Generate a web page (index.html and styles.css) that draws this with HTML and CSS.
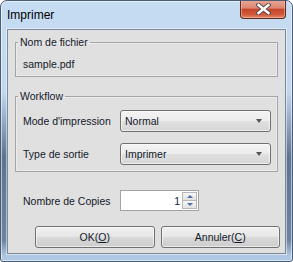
FILE: index.html
```html
<!DOCTYPE html>
<html lang="fr">
<head>
  <meta charset="UTF-8">
  <title>Imprimer</title>
  <link rel="stylesheet" href="styles.css">
</head>
<body>
  <div class="window">
    <div class="titlebar">
      <span class="title">Imprimer</span>
      <button class="close" aria-label="Fermer">
        <svg width="15" height="12" viewBox="0 0 15 12">
          <path d="M2.5 2 L12.5 10 M12.5 2 L2.5 10" stroke="#5a4a48" stroke-width="4.4" stroke-linecap="square"/>
          <path d="M2.5 2 L12.5 10 M12.5 2 L2.5 10" stroke="#ffffff" stroke-width="2.4" stroke-linecap="square"/>
        </svg>
      </button>
    </div>

    <div class="client">
      <fieldset class="group group-file">
        <legend>Nom de fichier</legend>
        <div class="filename">sample.pdf</div>
      </fieldset>

      <fieldset class="group group-workflow">
        <legend>Workflow</legend>
        <div class="row">
          <label class="label">Mode d'impression</label>
          <div class="combo">Normal<span class="arrow"></span></div>
        </div>
        <div class="row">
          <label class="label">Type de sortie</label>
          <div class="combo">Imprimer<span class="arrow"></span></div>
        </div>
      </fieldset>

      <div class="row copies">
        <label class="label">Nombre de Copies</label>
        <div class="spinbox">
          <span class="value">1</span>
          <div class="spin">
            <span class="spin-btn up"><span class="tri-up"></span></span>
            <span class="spin-btn down"><span class="tri-down"></span></span>
          </div>
        </div>
      </div>

      <div class="actions">
        <button class="btn">OK(<u>O</u>)</button>
        <button class="btn">Annuler(<u>C</u>)</button>
      </div>
    </div>
  </div>
</body>
</html>
```

FILE: styles.css
```css
body {
  margin: 0;
  background: #ffffff;
  font-family: 'Liberation Sans', Arial, sans-serif;
  font-size: 10.5px;
  color: #13192a;
}
.window {
  width: 293px;
  height: 262px;
  box-sizing: border-box;
  border: 1px solid #4a5d73;
  border-radius: 7px 7px 3px 3px;
  background:
    linear-gradient(to bottom, rgba(60, 85, 115, 0) 35%, rgba(60, 85, 115, 0.75) 60%, rgba(60, 85, 115, 0.6) 92%, rgba(60, 85, 115, 0) 98%) left top / 6px 100% no-repeat,
    linear-gradient(to bottom, rgba(60, 85, 115, 0) 35%, rgba(60, 85, 115, 0.75) 60%, rgba(60, 85, 115, 0.6) 92%, rgba(60, 85, 115, 0) 98%) right top / 6px 100% no-repeat,
    linear-gradient(to bottom, #c6dcf2 0%, #c0d7ef 40%, #aec8e4 100%);
  box-shadow: inset 0 0 0 1px rgba(255, 255, 255, 0.55);
  display: flex;
  flex-direction: column;
  overflow: hidden;
}
.titlebar {
  height: 28px;
  display: flex;
  align-items: center;
  padding-left: 6px;
  flex-shrink: 0;
}
.title {
  font-size: 12px;
  color: #000000;
}
.close {
  margin-left: auto;
  margin-right: 6px;
  align-self: flex-start;
  margin-top: -1px;
  width: 46px;
  height: 19px;
  padding: 0;
  border: 1px solid #5b2a21;
  border-top: none;
  border-radius: 0 0 4px 4px;
  background: linear-gradient(to bottom, #e9a897 0%, #dd8470 45%, #c4452b 52%, #d2583a 80%, #e08a6a 100%);
  box-shadow: inset 0 0 0 1px rgba(255, 200, 180, 0.5);
  display: flex;
  align-items: center;
  justify-content: center;
}
.client {
  flex: 1;
  margin: 0 6px 7px 6px;
  background: #e0e0e0;
  border: 1px solid #7c8896;
  box-shadow: 0 0 0 1px rgba(255, 255, 255, 0.5);
  display: flex;
  flex-direction: column;
}
.group {
  margin: 0 7px;
  padding: 0 6px 0 7px;
  border: 1px solid #a5a5a5;
  box-shadow: inset 0 0 0 1px rgba(255, 255, 255, 0.35);
  min-width: 0;
}
.group legend {
  margin-left: -5px;
  padding: 0 2px;
  line-height: 14px;
}
.group-file {
  margin-top: 5px;
  padding-top: 8px;
  padding-bottom: 5px;
}
.filename {
  line-height: 14px;
}
.group-workflow {
  margin-top: 12px;
  padding-top: 7px;
  padding-bottom: 6px;
  display: flex;
  flex-direction: column;
  gap: 11px;
}
.row {
  display: flex;
  align-items: center;
}
.label {
  width: 97px;
  flex-shrink: 0;
}
.combo {
  flex: 1;
  height: 22px;
  box-sizing: border-box;
  border: 1px solid #707070;
  border-radius: 3px;
  background: linear-gradient(to bottom, #f3f3f3 0%, #ececec 50%, #e0e0e0 51%, #d6d6d6 100%);
  box-shadow: inset 0 0 0 1px rgba(255, 255, 255, 0.6);
  padding-left: 4px;
  display: flex;
  align-items: center;
}
.arrow {
  margin-left: auto;
  margin-right: 8px;
  width: 0;
  height: 0;
  border-left: 3.5px solid transparent;
  border-right: 3.5px solid transparent;
  border-top: 4px solid #555555;
}
.copies {
  margin: 18px 0 0 15px;
}
.spinbox {
  width: 79px;
  height: 21px;
  box-sizing: border-box;
  border: 1px solid #a3a3a3;
  background: #ffffff;
  display: flex;
  align-items: center;
  padding: 1px;
}
.value {
  flex: 1;
  text-align: right;
  padding-right: 2px;
}
.spin {
  width: 15px;
  height: 17px;
  display: flex;
  flex-direction: column;
}
.spin-btn {
  flex: 1;
  box-sizing: border-box;
  border: 1px solid #b7b7b7;
  background: linear-gradient(to bottom, #f6f6f6, #e2e2e2);
  display: flex;
  align-items: center;
  justify-content: center;
}
.spin-btn.down {
  border-top: none;
}
.tri-up, .tri-down {
  width: 0;
  height: 0;
  border-left: 3px solid transparent;
  border-right: 3px solid transparent;
}
.tri-up {
  border-bottom: 3px solid #4c6fa8;
}
.tri-down {
  border-top: 3px solid #4c6fa8;
}
.actions {
  margin-top: 15px;
  padding: 0 5px 0 27px;
  display: flex;
  gap: 6px;
}
.btn {
  flex: 1;
  height: 22px;
  border: 1px solid #707070;
  border-radius: 3px;
  background: linear-gradient(to bottom, #f0f0f0 0%, #e6e6e6 50%, #d9d9d9 51%, #cdcdcd 100%);
  box-shadow: inset 0 0 0 1px rgba(255, 255, 255, 0.6);
  font-family: 'Liberation Sans', Arial, sans-serif;
  font-size: 10.5px;
  color: #13192a;
  padding: 0;
}
```
